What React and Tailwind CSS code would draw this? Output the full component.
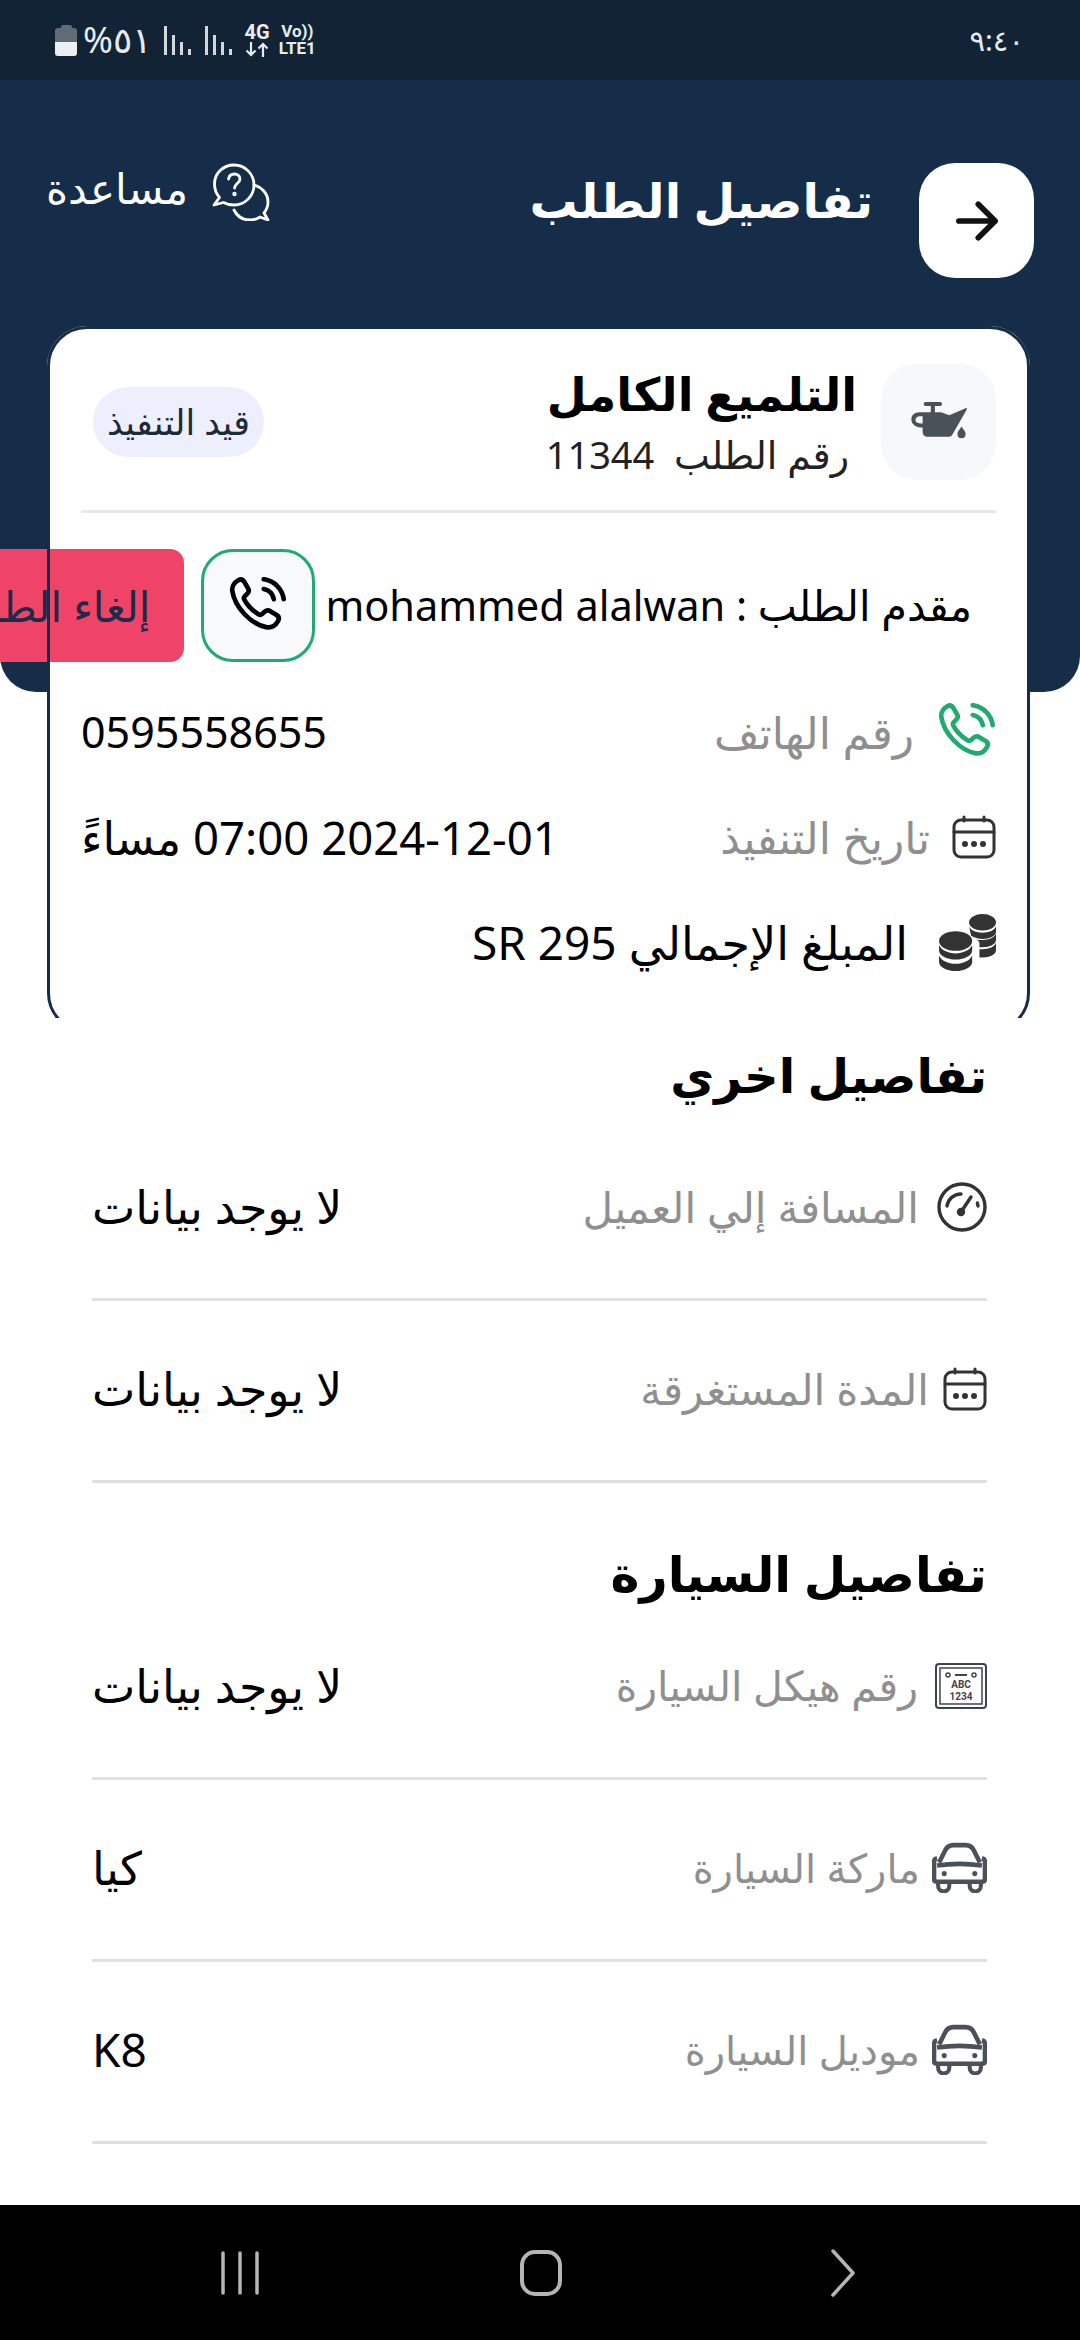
import React from "react";

const FONT = "font-['Noto_Sans','DejaVu_Sans',sans-serif]";

const PhoneCall = ({ className }) => (
  <svg viewBox="2 1.400 20.800 21.200" fill="none" stroke="currentColor" strokeWidth="1.700" strokeLinecap="round" strokeLinejoin="round" className={className}>
    <path d="M5.200 2.600c.9-.5 1.700-.2 2.200.6l1.300 2.200c.5.8.4 1.500-.2 2.100l-1 1c-.3.3-.3.6-.2 1 .6 1.400 2.900 4.200 5.400 5.600.4.200.8.200 1.100-.1l1-.9c.7-.6 1.400-.7 2.100-.2l2.300 1.400c.8.500 1 1.300.5 2.200-.8 1.400-2.300 2.500-4 2.300C10 18.900 3.800 12.400 3 6.400c-.2-1.500.8-3 2.200-3.800z" />
    <path d="M14.500 5.800c1.900.4 3.300 1.800 3.700 3.700" />
    <path d="M14.500 2.200c3.800.5 6.800 3.500 7.300 7.300" />
  </svg>
);

const CalendarDots = ({ className }) => (
  <svg viewBox="0 0 44 44" fill="none" stroke="currentColor" strokeWidth="3" strokeLinecap="round" strokeLinejoin="round" className={className}>
    <rect x="2" y="5" width="40" height="37" rx="7" />
    <path d="M2 17h40M12 2v4M32 2v4" />
    <circle cx="13" cy="29" r="1.500" fill="currentColor" />
    <circle cx="22" cy="29" r="1.500" fill="currentColor" />
    <circle cx="31" cy="29" r="1.500" fill="currentColor" />
  </svg>
);

const Gauge = ({ className }) => (
  <svg viewBox="0 0 50 50" fill="none" stroke="currentColor" strokeWidth="3.400" strokeLinecap="round" className={className}>
    <circle cx="25" cy="25" r="23" />
    <path d="M10 24c1-7 7-12 14-12" />
    <path d="M24 30l10-15" />
    <circle cx="24" cy="30" r="2.500" fill="currentColor" />
    <path d="M41 24l-.6-3" />
  </svg>
);

const Plate = ({ className }) => (
  <svg viewBox="0 0 52 46" fill="none" stroke="currentColor" className={className}>
    <rect x="1" y="1" width="50" height="44" rx="3" strokeWidth="2" />
    <rect x="5" y="5" width="42" height="36" strokeWidth="1.500" />
    <circle cx="13" cy="12" r="2" strokeWidth="1.500" />
    <circle cx="39" cy="12" r="2" strokeWidth="1.500" />
    <path d="M20 12h12" strokeWidth="2" />
    <text x="26" y="25" textAnchor="middle" fontSize="10" fontWeight="700" fill="currentColor" stroke="none" fontFamily="Roboto, sans-serif">ABC</text>
    <text x="26" y="37" textAnchor="middle" fontSize="10" fontWeight="700" fill="currentColor" stroke="none" fontFamily="Roboto, sans-serif">1234</text>
  </svg>
);

const Car = ({ className }) => (
  <svg viewBox="0 0 54 50" fill="none" stroke="currentColor" className={className}>
    <path d="M7 20l6-12c1.500-3 4-5 8-5h12c4 0 6.500 2 8 5l6 12" strokeWidth="4.500" strokeLinejoin="round" />
    <path d="M5 16c-2 .5-3 1.500-3 3v17c0 2 1 3 3 3h44c2 0 3-1 3-3V19c0-1.500-1-2.500-3-3" strokeWidth="4.500" strokeLinejoin="round" />
    <path d="M5 23c14-2 30-2 44 0" strokeWidth="4.500" />
    <path d="M6 39v4a5 5 0 0 0 11 0v-4M37 39v4a5 5 0 0 0 11 0v-4" strokeWidth="4" />
    <circle cx="12" cy="31" r="2.500" fill="currentColor" stroke="none" />
    <circle cx="42" cy="31" r="2.500" fill="currentColor" stroke="none" />
  </svg>
);

const Coins = ({ className }) => (
  <svg viewBox="0 0 56 56" fill="currentColor" className={className}>
    <ellipse cx="43" cy="9" rx="13" ry="8" />
    <path d="M30 13c2 4 7 6 13 6s11-2 13-6v5c0 4-6 7-13 7-4 0-8-1-11-3z" />
    <path d="M36 25c2 1 4 1 7 1 6 0 11-2 13-6v6c0 4-6 7-13 7h-3v-4c0-2-2-3-4-4z" />
    <path d="M40 35h3c6 0 11-2 13-6v7c0 4-6 7-13 7h-3z" />
    <ellipse cx="17" cy="27" rx="16" ry="9.500" />
    <path d="M1 31c2 5 9 8 16 8s14-3 16-8v5c0 5-7 9-16 9S1 41 1 36z" />
    <path d="M1 41c2 5 9 8 16 8s14-3 16-8v6c0 5-7 9-16 9S1 52 1 47z" />
  </svg>
);

const OilCan = ({ className }) => (
  <svg viewBox="0 0 56 42" fill="currentColor" className={className}>
    <rect x="13" y="1" width="18" height="4" rx="2" />
    <rect x="20" y="4" width="4" height="8" />
    <path d="M9 11h21l8 3 16-7c1-.4 1.700.6 1 1.500L41 33c-.8 1.300-2 2-3.500 2H17c-3 0-5-2-5-5v-4c-6 0-11-3-11-8 0-4 3-7 8-7zm0 4c-2 0-4 1.500-4 3.500S7 22 12 22v-7z" fillRule="evenodd" />
    <path d="M50 25c2 3 4 5 4 7.500a4 4 0 0 1-8 0c0-2.500 2-4.500 4-7.500z" />
  </svg>
);

const HelpChat = ({ className }) => (
  <svg viewBox="0 0 56 58" fill="none" stroke="currentColor" strokeWidth="2.800" strokeLinejoin="round" strokeLinecap="round" className={className}>
    <path d="M21 2C10 2 1.500 10.500 1.500 21c0 5 2 10 5 13.500L1 42l9.500-2.500c3 1.700 6.500 2.500 10.500 2.500 11 0 20-9 20-20S32 2 21 2z" />
    <path d="M41 22c8 2 14 9 14 17 0 4-1.500 8-4 11l4 7-8-3c-3 2-6.500 3-10 3-7 0-13-4-16-10" />
    <path d="M15.500 16c.5-3 3-5 6-5s5.500 2 5.500 5c0 4-5 4.500-5.500 9" />
    <circle cx="21.500" cy="31" r=".8" fill="currentColor" />
  </svg>
);

const Row = ({ icon, label, value, labelClass }) => (
  <div className="flex items-center h-[182px] pb-[4px] border-b-[3px] border-[#e0e0e0]">
    <span className="shrink-0 flex">{icon}</span>
    <span className={`text-[#8f8f8f] flex-1 ${labelClass}`}>{label}</span>
    <span className="text-black text-[46px]">{value}</span>
  </div>
);

const Signal = () => (
  <div className="flex items-end gap-[5px] h-[29px]">
    <span className="w-[3px] h-[29px] bg-[#d5d8db]" />
    <span className="w-[3px] h-[20px] bg-[#d5d8db]" />
    <span className="w-[3px] h-[13px] bg-[#d5d8db]" />
    <span className="w-[3px] h-[6px] bg-[#d5d8db]" />
  </div>
);

export default function App() {
  return (
    <div dir="rtl" className={`${FONT} relative w-[1080px] h-[2340px] overflow-hidden bg-white flex flex-col`}>
      <div dir="ltr" className="h-[80px] shrink-0 bg-[#122335] flex items-center justify-between pl-[55px] pr-[56px] text-[#e8ebee]">
        <div className="flex items-center">
          <div className="flex flex-col items-center">
            <div className="w-[11px] h-[3px] rounded-t-[2px] bg-[#5f6b76]" />
            <div className="w-[22px] h-[28px] rounded-[3px] bg-[#5f6b76] flex flex-col justify-end overflow-hidden">
              <div className="h-[14px] bg-[#eceeef]" />
            </div>
          </div>
          <span className="text-[36px] ml-[6px] leading-none">%٥١</span>
          <div className="ml-[12px]"><Signal /></div>
          <div className="ml-[14px]"><Signal /></div>
          <div className="ml-[13px] flex flex-col items-center font-bold font-['Roboto']">
            <span className="text-[20px] leading-[18px]">4G</span>
            <svg viewBox="0 0 24 15" fill="none" stroke="currentColor" strokeWidth="2.200" className="w-[24px] h-[15px] mt-[1px]">
              <path d="M6 0v13M1.500 8.500L6 13l4.500-4.500M18 15V2M13.500 6.500L18 2l4.500 4.500" />
            </svg>
          </div>
          <div className="ml-[9px] flex flex-col items-center text-[17px] font-bold leading-[17px] font-['Roboto']"><span>Vo))</span><span>LTE1</span></div>
        </div>
        <span className="text-[29px]">٩:٤٠</span>
      </div>

      <div className="bg-[#152d48] h-[612px] shrink-0 rounded-b-[36px] px-[46px]">
        <div className="flex items-start justify-between mt-[83px]">
          <div className="flex items-start">
            <div className="w-[115px] h-[115px] rounded-[36px] bg-white flex items-center justify-center text-[#111]">
              <svg viewBox="0 0 24 24" fill="none" stroke="currentColor" strokeWidth="2.200" strokeLinecap="round" strokeLinejoin="round" className="w-[62px] h-[62px]">
                <path d="M5 12h14M12.500 5.500L19 12l-6.500 6.500" />
              </svg>
            </div>
            <span className="text-white text-[48px] font-semibold mr-[46px] leading-[70px] mt-[2px]">تفاصيل الطلب</span>
          </div>
          <div className="flex items-start text-white">
            <HelpChat className="w-[58px] h-[58px]" />
            <span className="text-[42px] mr-[24px] leading-[50px]">مساعدة</span>
          </div>
        </div>
      </div>

      {/* card sticks out of the header, and its end is cut by the list below it */}
      <div className="h-[692px] -mt-[366px] shrink-0 overflow-hidden">
        <div className="relative ml-[47px] mr-[50px] h-[707px] rounded-[40px] bg-white pt-[37px] px-[34px]">
          <div className="flex items-center">
            <div className="w-[115px] h-[116px] rounded-[36px] bg-[#f7f8fa] flex items-center justify-center text-[#4b5158] shrink-0">
              <OilCan className="w-[58px] h-[43px]" />
            </div>
            <div className="flex-1 mr-[24px]">
              <div className="text-[46px] font-bold text-black leading-[60px]">التلميع الكامل</div>
              <div className="text-[38px] text-[#222] leading-[54px] mt-[4px] mr-[8px]">رقم الطلب&nbsp; 11344</div>
            </div>
            <div className="h-[70px] rounded-full bg-[#edf0fc] flex items-center px-[14px] text-[35px] text-[#1e2a3a] ml-[12px]">قيد التنفيذ</div>
          </div>
          <div className="h-[3px] bg-[#e8e8e8] mt-[29px]" />
          <div className="flex items-center mt-[36px] whitespace-nowrap">
            <span className="text-[41.500px] text-black mr-[24px]">مقدم الطلب : mohammed alalwan</span>
            <div className="w-[114px] h-[113px] rounded-[32px] border-[3px] border-[#1faa6e] bg-[#f7f9fb] flex items-center justify-center text-black shrink-0 mr-[10px]">
              <PhoneCall className="w-[58px] h-[58px]" />
            </div>
            <div className="h-[113px] w-[290px] shrink-0 rounded-[14px] bg-[#ef4468] flex items-center pr-[34px] mr-[17px] text-[42px] text-[#1e2a4a]">إلغاء الطلب</div>
          </div>
          <div className="flex items-center justify-between h-[60px] mt-[40px]">
            <div className="flex items-center">
              <PhoneCall className="w-[58px] h-[58px] text-[#1faa6e]" />
              <span className="text-[#8f8f8f] text-[44px] mr-[24px]">رقم الهاتف</span>
            </div>
            <span dir="ltr" className="text-black text-[43px]">0595558655</span>
          </div>
          <div className="flex items-center justify-between h-[60px] mt-[45px]">
            <div className="flex items-center">
              <CalendarDots className="w-[44px] h-[46px] text-[#333]" />
              <span className="text-[#8f8f8f] text-[44px] mr-[22px]">تاريخ التنفيذ</span>
            </div>
            <span className="text-black text-[45.500px]">2024-12-01 07:00 مساءً</span>
          </div>
          <div className="flex items-center h-[60px] mt-[45px]">
            <Coins className="w-[58px] h-[58px] text-[#333]" />
            <span className="text-black text-[46px] mr-[30px]">المبلغ الإجمالي SR 295</span>
          </div>
          {/* border sits over the cancel button in the reference */}
          <div className="absolute inset-0 rounded-[40px] border-[3px] border-[#152d48] pointer-events-none" />
        </div>
      </div>

      <div className="flex-1 pl-[92px] pr-[93px] min-h-0">
        <div className="text-[48px] font-bold text-black leading-[70px] mt-[22px]">تفاصيل اخري</div>
        <div className="mt-[9px]">
          <Row icon={<Gauge className="w-[50px] h-[50px] text-[#333]" />} label="المسافة إلي العميل" value="لا يوجد بيانات" labelClass="text-[42px] mr-[18px]" />
        </div>
        <Row icon={<CalendarDots className="w-[44px] h-[46px] text-[#333]" />} label="المدة المستغرقة" value="لا يوجد بيانات" labelClass="text-[42px] mr-[14px]" />
        <div className="text-[49px] font-bold text-black leading-[70px] mt-[55px]">تفاصيل السيارة</div>
        <div className="-mt-[10px]">
          <Row icon={<Plate className="w-[52px] h-[46px] text-[#3f444c]" />} label="رقم هيكل السيارة" value="لا يوجد بيانات" labelClass="text-[41px] mr-[17px]" />
        </div>
        <Row icon={<Car className="w-[55px] h-[51px] text-[#4b5159]" />} label="ماركة السيارة" value="كيا" labelClass="text-[40px] mr-[12px]" />
        <Row icon={<Car className="w-[55px] h-[51px] text-[#4b5159]" />} label="موديل السيارة" value="K8" labelClass="text-[40px] mr-[12px]" />
      </div>

      <div dir="ltr" className="h-[135px] shrink-0 bg-black flex items-center justify-center pr-[6px] text-[#b5b5b5]">
        <svg viewBox="0 0 42 44" className="w-[42px] h-[44px] mr-[259px]" stroke="currentColor" strokeWidth="3.500" strokeLinecap="round"><path d="M4 2v40M21 2v40M38 2v40" /></svg>
        <svg viewBox="0 0 42 46" className="w-[42px] h-[46px] mr-[268px]" fill="none" stroke="currentColor" strokeWidth="4"><rect x="2" y="2" width="38" height="42" rx="13" /></svg>
        <svg viewBox="0 0 26 50" className="w-[26px] h-[50px]" fill="none" stroke="currentColor" strokeWidth="3.500" strokeLinecap="round" strokeLinejoin="round"><path d="M3 3l20 22L3 47" /></svg>
      </div>
    </div>
  );
}
